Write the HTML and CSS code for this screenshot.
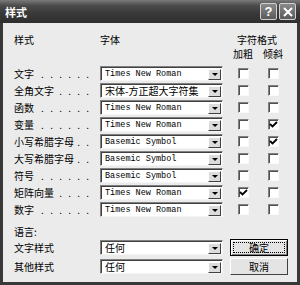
FILE: index.html
```
<!DOCTYPE html>
<html lang="zh">
<head>
  <meta charset="UTF-8">
  <title>样式</title>
  <link rel="stylesheet" href="styles.css">
</head>
<body>
  <div class="window">
    <div class="titlebar">
      <span class="title">样式</span>
      <div class="tbtns">
        <span class="tbtn">?</span>
        <span class="tbtn">
          <svg width="10" height="10" viewBox="0 0 10 10"><path d="M1 1 L9 9 M9 1 L1 9" stroke="#fff" stroke-width="2"/></svg>
        </span>
      </div>
    </div>

    <div class="body">
      <div class="grid head">
        <span>样式</span>
        <span>字体</span>
        <span class="span2">字符格式</span>
        <span></span>
        <span></span>
        <span class="c">加粗</span>
        <span class="c">倾斜</span>
      </div>

      <div class="grid rows">
        <div class="label"><span>文字</span><span class="dots">. . . . . .</span></div>
        <div class="combo mono">Times New Roman<i class="arrow"></i></div>
        <div class="cell"><span class="check"></span></div>
        <div class="cell"><span class="check"></span></div>

        <div class="label"><span>全角文字</span><span class="dots">. . . .</span></div>
        <div class="combo">宋体-方正超大字符集<i class="arrow"></i></div>
        <div class="cell"><span class="check"></span></div>
        <div class="cell"><span class="check"></span></div>

        <div class="label"><span>函数</span><span class="dots">. . . . . .</span></div>
        <div class="combo mono">Times New Roman<i class="arrow"></i></div>
        <div class="cell"><span class="check"></span></div>
        <div class="cell"><span class="check"></span></div>

        <div class="label"><span>变量</span><span class="dots">. . . . . .</span></div>
        <div class="combo mono">Times New Roman<i class="arrow"></i></div>
        <div class="cell"><span class="check"></span></div>
        <div class="cell"><span class="check on"><svg width="9" height="9" viewBox="0 0 9 9"><path d="M1 4 L3.5 6.5 L8 2" fill="none" stroke="#000" stroke-width="1.8"/></svg></span></div>

        <div class="label"><span>小写希腊字母</span><span class="dots">. .</span></div>
        <div class="combo mono">Basemic Symbol<i class="arrow"></i></div>
        <div class="cell"><span class="check"></span></div>
        <div class="cell"><span class="check on"><svg width="9" height="9" viewBox="0 0 9 9"><path d="M1 4 L3.5 6.5 L8 2" fill="none" stroke="#000" stroke-width="1.8"/></svg></span></div>

        <div class="label"><span>大写希腊字母</span><span class="dots">. .</span></div>
        <div class="combo mono">Basemic Symbol<i class="arrow"></i></div>
        <div class="cell"><span class="check"></span></div>
        <div class="cell"><span class="check"></span></div>

        <div class="label"><span>符号</span><span class="dots">. . . . . .</span></div>
        <div class="combo mono">Basemic Symbol<i class="arrow"></i></div>
        <div class="cell"><span class="check"></span></div>
        <div class="cell"><span class="check"></span></div>

        <div class="label"><span>矩阵向量</span><span class="dots">. . . .</span></div>
        <div class="combo mono">Times New Roman<i class="arrow"></i></div>
        <div class="cell"><span class="check on"><svg width="9" height="9" viewBox="0 0 9 9"><path d="M1 4 L3.5 6.5 L8 2" fill="none" stroke="#000" stroke-width="1.8"/></svg></span></div>
        <div class="cell"><span class="check"></span></div>

        <div class="label"><span>数字</span><span class="dots">. . . . . .</span></div>
        <div class="combo mono">Times New Roman<i class="arrow"></i></div>
        <div class="cell"><span class="check"></span></div>
        <div class="cell"><span class="check"></span></div>
      </div>

      <div class="lang">语言:</div>

      <div class="bottom">
        <div class="label">文字样式</div>
        <div class="combo">任何<i class="arrow"></i></div>
        <div class="btn default"><span class="focus">确定</span></div>

        <div class="label">其他样式</div>
        <div class="combo">任何<i class="arrow"></i></div>
        <div class="btn"><span>取消</span></div>
      </div>
    </div>
  </div>
</body>
</html>
```

FILE: styles.css
```
body {
  margin: 0;
  font-family: "Noto Sans CJK SC", "Liberation Sans", sans-serif;
  font-size: 10px;
  color: #000;
  background: #fff;
}

.window {
  width: 300px;
  height: 285px;
  background: #383838;
  display: flex;
  flex-direction: column;
  box-sizing: border-box;
}

.titlebar {
  height: 23px;
  flex: none;
  display: flex;
  align-items: center;
  padding: 0 4px 0 5px;
  background: linear-gradient(#7a7a7a, #4a4a4a 25%, #383838 60%, #2e2e2e);
}

.title {
  color: #fff;
  font-weight: bold;
  font-size: 11px;
  line-height: 12px;
}

.tbtns {
  margin-left: auto;
  display: flex;
  gap: 2px;
}

.tbtn {
  width: 15px;
  height: 15px;
  border: 1px solid #d0d0d0;
  border-radius: 2px;
  background: linear-gradient(#8a8a8a, #5a5a5a);
  color: #fff;
  font-family: "Liberation Sans", sans-serif;
  font-weight: bold;
  font-size: 13px;
  line-height: 15px;
  text-align: center;
  display: flex;
  align-items: center;
  justify-content: center;
}

.body {
  flex: 1;
  margin: 0 3px 3px;
  background: #ebebeb;
  padding: 11px 0 0 11px;
}

.grid {
  display: grid;
  grid-template-columns: 86px 123px 40px 20px;
}

.head {
  line-height: 12px;
  row-gap: 2px;
}

.head .span2 {
  grid-column: span 2;
  padding-left: 14px;
}

.c {
  text-align: center;
}

.rows {
  margin-top: 6px;
  grid-auto-rows: 15px;
  row-gap: 2px;
}

.label {
  display: flex;
  align-items: center;
  white-space: nowrap;
  line-height: 12px;
}

.dots {
  margin-left: auto;
  padding-right: 9px;
  letter-spacing: 2px;
}

.combo {
  box-sizing: border-box;
  height: 15px;
  width: 123px;
  background: #fff;
  border: 1px solid;
  border-color: #808080 #f4f4f4 #f4f4f4 #808080;
  box-shadow: inset 1px 1px 0 #404040;
  display: flex;
  align-items: center;
  padding: 0 1px 0 4px;
  line-height: 12px;
  white-space: nowrap;
}

.mono {
  font-family: "Liberation Mono", monospace;
  font-size: 8.5px;
}

.arrow {
  margin-left: auto;
  flex: none;
  width: 13px;
  height: 11px;
  margin-top: 1px;
  box-sizing: border-box;
  background: #dcdcdc;
  border: 1px solid;
  border-color: #fff #404040 #404040 #fff;
  display: flex;
  align-items: center;
  justify-content: center;
}

.arrow::after {
  content: "";
  border-left: 3px solid transparent;
  border-right: 3px solid transparent;
  border-top: 3px solid #000;
}

.cell {
  display: flex;
  align-items: center;
  justify-content: center;
}

.check {
  box-sizing: border-box;
  width: 11px;
  height: 11px;
  background: #fff;
  border: 1px solid;
  border-color: #808080 #fafafa #fafafa #808080;
  box-shadow: inset 1px 1px 0 #505050;
  display: flex;
  align-items: center;
  justify-content: center;
}

.lang {
  margin-top: 9px;
  line-height: 12px;
}

.bottom {
  display: grid;
  grid-template-columns: 86px 130px 58px;
  grid-auto-rows: 17px;
  row-gap: 2px;
  margin-top: 1px;
  align-items: center;
}

.btn {
  box-sizing: border-box;
  height: 17px;
  background: #e4e4e4;
  border: 1px solid;
  border-color: #fff #404040 #404040 #fff;
  display: flex;
  align-items: center;
  justify-content: center;
  line-height: 12px;
}

.btn.default {
  border: 1px solid #000;
  box-shadow: inset 1px 1px 0 #fff, inset -1px -1px 0 #808080;
}

.focus {
  flex: 1;
  align-self: stretch;
  margin: 2px;
  border: 1px dotted #000;
  display: flex;
  align-items: center;
  justify-content: center;
}
```
